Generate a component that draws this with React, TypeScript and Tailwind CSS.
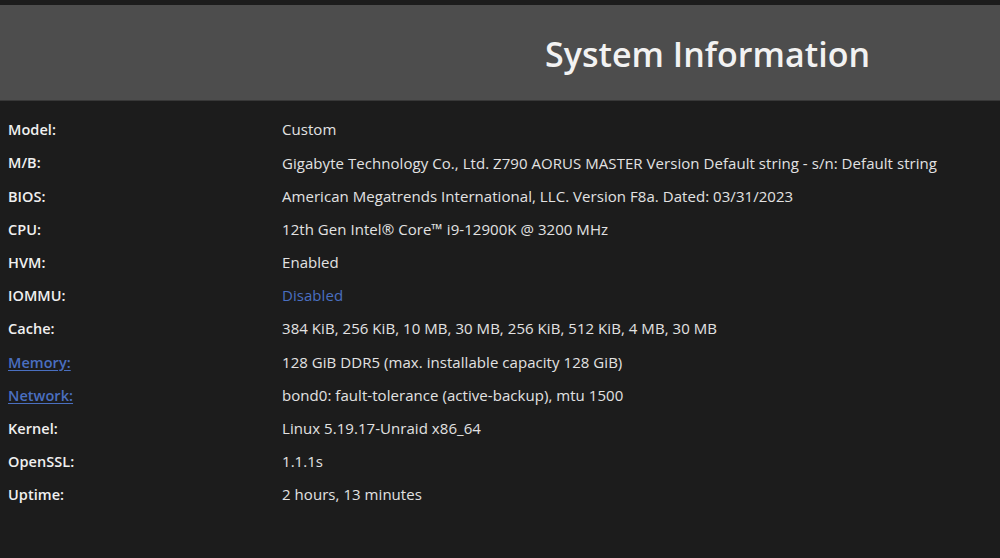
const rows: { label: string; value: string; labelLink?: boolean; valueLink?: boolean }[] = [
  { label: 'Model:', value: 'Custom' },
  { label: 'M/B:', value: 'Gigabyte Technology Co., Ltd. Z790 AORUS MASTER Version Default string - s/n: Default string' },
  { label: 'BIOS:', value: 'American Megatrends International, LLC. Version F8a. Dated: 03/31/2023' },
  { label: 'CPU:', value: '12th Gen Intel® Core™ i9-12900K @ 3200 MHz' },
  { label: 'HVM:', value: 'Enabled' },
  { label: 'IOMMU:', value: 'Disabled', valueLink: true },
  { label: 'Cache:', value: '384 KiB, 256 KiB, 10 MB, 30 MB, 256 KiB, 512 KiB, 4 MB, 30 MB' },
  { label: 'Memory:', value: '128 GiB DDR5 (max. installable capacity 128 GiB)', labelLink: true },
  { label: 'Network:', value: 'bond0: fault-tolerance (active-backup), mtu 1500', labelLink: true },
  { label: 'Kernel:', value: 'Linux 5.19.17-Unraid x86_64' },
  { label: 'OpenSSL:', value: '1.1.1s' },
  { label: 'Uptime:', value: '2 hours, 13 minutes' },
];

export default function App() {
  return (
    <div className="min-h-[558px] w-[1000px] bg-[#1c1c1c] pt-[5px] font-['Open_Sans',sans-serif]">
      {/* header */}
      <div className="flex h-[96px] items-center justify-end border-b border-[#383838] bg-[#4d4d4d] pr-[130px]">
        <h1 className="pt-[2px] text-[34px] font-semibold leading-none text-[#f2f2f2]">System Information</h1>
      </div>

      {/* info table */}
      <div className="pt-[12px]">
        {rows.map((r) => (
          <div key={r.label} className="flex h-[33.2px] items-center text-[15px] tracking-[0.05px]">
            <div className="w-[282px] pl-[8px]">
              <span
                className={
                  r.labelLink
                    ? 'text-[14.5px] font-semibold text-[#4a6fc0] underline underline-offset-2'
                    : 'text-[14.5px] font-semibold text-[#f0f0f0]'
                }
              >
                {r.label}
              </span>
            </div>
            <div className={r.valueLink ? 'text-[#4a6fc0]' : 'text-[#e2e2e2]'}>{r.value}</div>
          </div>
        ))}
      </div>
    </div>
  );
}
